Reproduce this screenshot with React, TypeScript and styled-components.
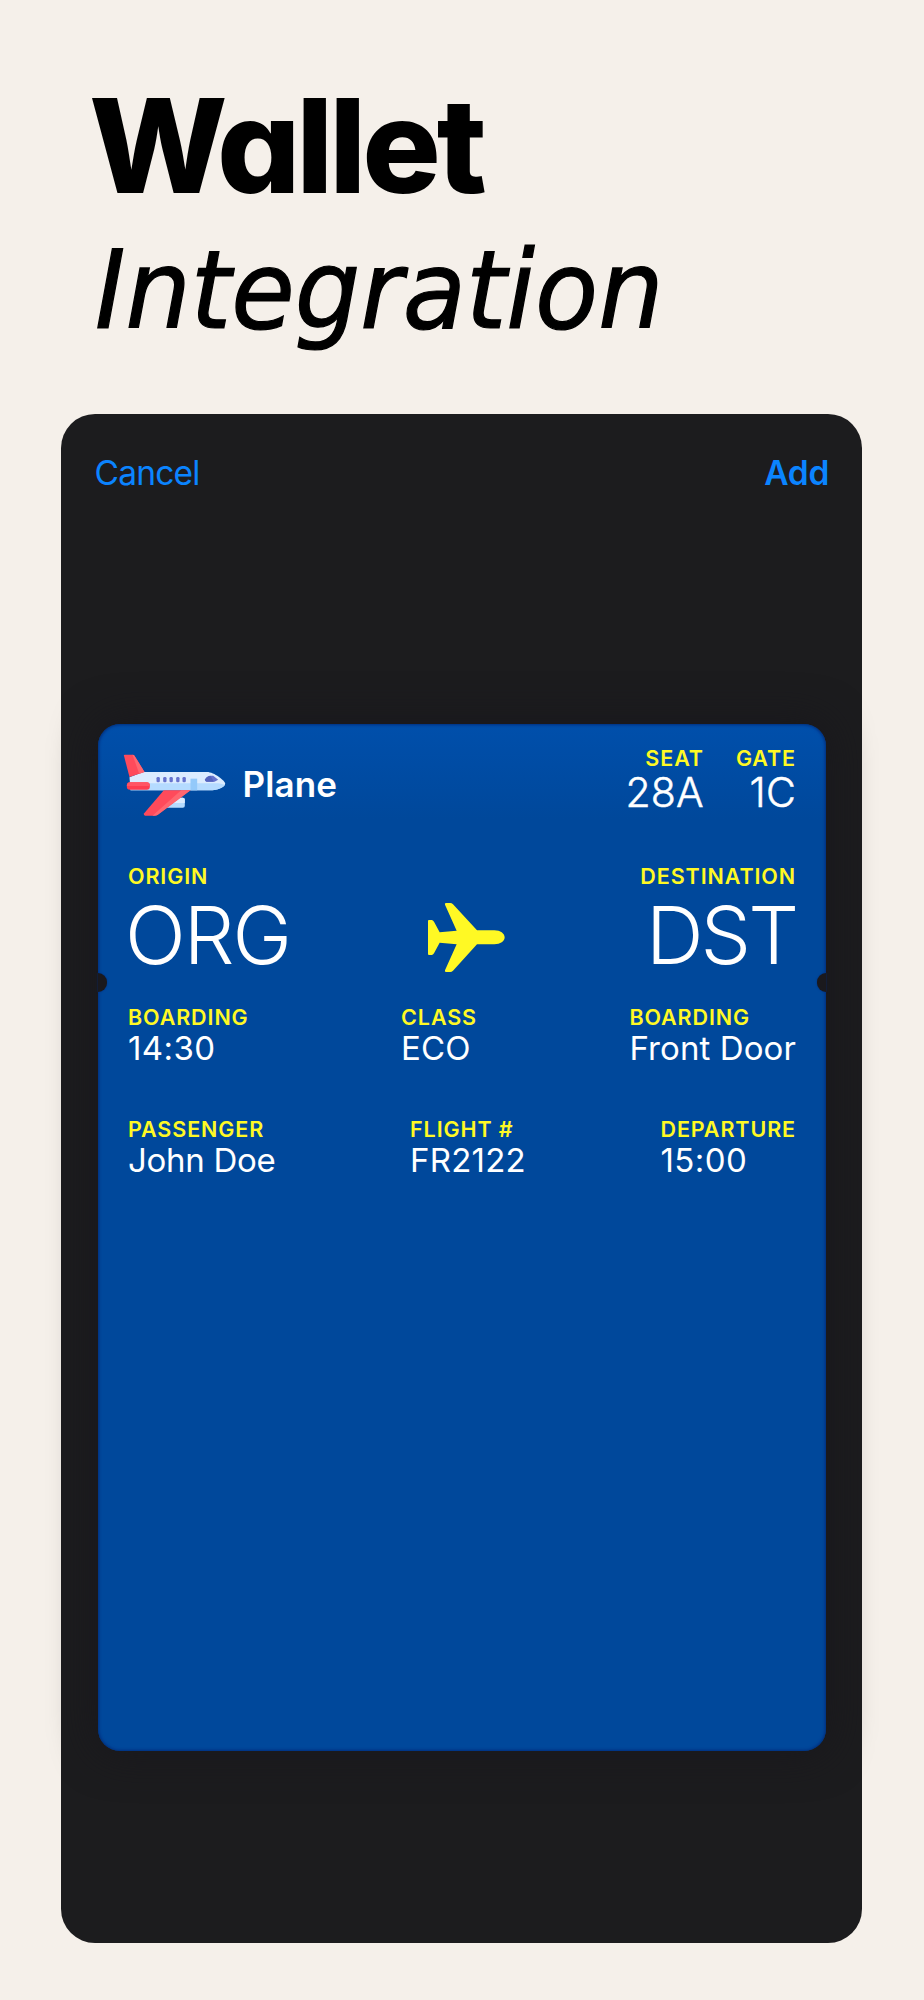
import React from "react";
import styled, { createGlobalStyle } from "styled-components";

interface PassField {
    label: string;
    value: string;
    tracking?: number;
}

const headerFields: PassField[] = [
    { label: "SEAT", value: "28A" },
    { label: "GATE", value: "1C" },
];

const originField: PassField = { label: "ORIGIN", value: "ORG", tracking: -2 };
const destinationField: PassField = { label: "DESTINATION", value: "DST", tracking: -3 };

const auxiliaryRows: PassField[][] = [
    [
        { label: "BOARDING", value: "14:30", tracking: 0.4 },
        { label: "CLASS", value: "ECO", tracking: 0.1 },
        { label: "BOARDING", value: "Front Door", tracking: 0.1 },
    ],
    [
        { label: "PASSENGER", value: "John Doe", tracking: -0.3 },
        { label: "FLIGHT #", value: "FR2122", tracking: 0.2 },
        { label: "DEPARTURE", value: "15:00", tracking: 0.4 },
    ],
];

const PlaneLogo: React.FC = () => (
    <Logo viewBox="40 58 308 186">
        <path d="M59 128 L100 112 H292 C312 112 346 138 346 147 C346 157 322 167 300 167 H62 Z" fill="#dcecff" />
        <path d="M60 146 H326 L345 150 C340 160 320 167 300 167 H62 Z" fill="#b5dbff" />
        <path d="M242 132 H262 V167 H242 Z" fill="#93c9fa" />
        <path d="M42 62 Q42 60 45 60 H69 Q72 60 74 63 L104 112 L59 127 Z" fill="#ff4a5b" />
        <path d="M68 60 Q72 60 74 63 L104 112 L88 117 Z" fill="#ff6670" />
        <rect x="51" y="143" width="69" height="22" rx="9" fill="#fd3e50" />
        <path d="M60 143 H111 Q120 143 120 154 H51 Q52 143 60 143 Z" fill="#ff5564" />
        <path d="M196 189 H219 Q225 189 225 195 V213 Q225 219 219 219 H170 Z" fill="#b5dbff" />
        <path d="M196 189 H219 Q225 189 225 195 V205 H184 Z" fill="#dcecff" />
        <path d="M162 167 H242 L143 241 Q139 243 134 243 H106 Q100 242 103 236 Z" fill="#ff4a5b" />
        <path d="M214 167 H242 L143 241 Q139 243 134 243 H128 Z" fill="#ff6670" />
        <path d="M286 134 Q292 123 304 123 H310 L325 135 L314 141 H290 Q284 140 286 134 Z" fill="#6673ce" />
        <path d="M286 134 Q292 123 302 123 L312 141 H290 Q284 140 286 134 Z" fill="#5564bd" />
        {[140, 160, 179, 199, 218].map((x) => (
            <rect key={x} x={x} y="127" width="10" height="16" rx="4" fill="#6673ce" />
        ))}
    </Logo>
);

const TransitIcon: React.FC = () => (
    <Transit viewBox="83 69 231 207">
        <path
            d="M83 122 Q83 120 86 120 H94 Q98 120 101 125 L118 157 L169 152 L134 74 Q132 69 137 69 H150 Q154 69 158 73 L230 151 H282 C300 151 313 161 313 172 C313 184 300 193 282 193 H230 L158 272 Q154 276 150 276 H137 Q132 276 134 271 L169 193 L118 188 L101 220 Q98 225 94 225 H86 Q83 225 83 222 Z"
            fill="#fff924"
        />
    </Transit>
);

interface FieldProps {
    field: PassField;
    size: FieldSize;
    alignEnd?: boolean;
}

const Field: React.FC<FieldProps> = ({ field, size, alignEnd }) => (
    <FieldColumn $alignEnd={alignEnd}>
        <FieldLabel>{field.label}</FieldLabel>
        <FieldValue $size={size} $tracking={field.tracking}>{field.value}</FieldValue>
    </FieldColumn>
);

const App: React.FC = () => (
    <Page>
        <GlobalStyle />
        <Heading>
            <Title>Wallet</Title>
            <Subtitle>Integration</Subtitle>
        </Heading>
        <Sheet>
            <Toolbar>
                <ToolbarButton>Cancel</ToolbarButton>
                <ToolbarButton $primary>Add</ToolbarButton>
            </Toolbar>
            <Pass>
                <PassHeader>
                    <Brand>
                        <PlaneLogo />
                        <BrandName>Plane</BrandName>
                    </Brand>
                    <HeaderFields>
                        {headerFields.map((field) => (
                            <Field key={field.label} field={field} size="header" alignEnd />
                        ))}
                    </HeaderFields>
                </PassHeader>
                <PrimaryRow>
                    <Field field={originField} size="primary" />
                    <TransitIcon />
                    <Field field={destinationField} size="primary" alignEnd />
                </PrimaryRow>
                <AuxiliaryRows>
                    {auxiliaryRows.map((row, index) => (
                        <AuxiliaryRow key={index}>
                            {row.map((field, i) => (
                                <Field key={i} field={field} size="auxiliary" />
                            ))}
                        </AuxiliaryRow>
                    ))}
                </AuxiliaryRows>
            </Pass>
        </Sheet>
    </Page>
);

const GlobalStyle = createGlobalStyle`
    * {
        box-sizing: border-box;
    }

    body {
        margin: 0;
        background-color: #f5f0ea;
    }
`;

const Page = styled.main`
    display: flex;
    flex-direction: column;
    width: 924px;
    height: 2000px;
    padding: 75.5px 62px 57px 61px;
    overflow: hidden;
    background-color: #f5f0ea;
    font-family: Inter, "Liberation Sans", sans-serif;
`;

const Heading = styled.div`
    display: flex;
    flex-direction: column;
    align-items: flex-start;
    height: 338.5px;
    padding-left: 28px;
    color: #000;
`;

const Title = styled.h1`
    margin: 0;
    font-size: 131px;
    font-weight: 800;
    line-height: 140px;
    letter-spacing: -4.2px;
    font-feature-settings: "cv11" 1;
`;

const Subtitle = styled.h2`
    margin: 5.5px 0 0 6px;
    font-family: "DejaVu Sans Condensed", "DejaVu Sans", sans-serif;
    font-size: 108px;
    font-style: italic;
    font-weight: 400;
    font-stretch: condensed;
    line-height: 140px;
    -webkit-text-stroke: 1.2px #000;
    transform: scaleX(1.062);
    transform-origin: left center;
`;

const Sheet = styled.section`
    flex-grow: 1;
    display: flex;
    flex-direction: column;
    padding: 39px 36px 0 36.5px;
    border-radius: 34px;
    background-color: #1c1c1e;
`;

const Toolbar = styled.header`
    display: flex;
    justify-content: space-between;
    height: 271px;
    margin: 0 -3px;
`;

const ToolbarButton = styled.button<{ $primary?: boolean }>`
    height: 40px;
    padding: 0;
    border: none;
    background: none;
    color: #0b84ff;
    font-family: inherit;
    font-size: 33.5px;
    font-weight: ${({ $primary }) => ($primary ? 600 : 400)};
    line-height: 40px;
    letter-spacing: ${({ $primary }) => ($primary ? -0.3 : -0.8)}px;
`;

const Pass = styled.article`
    position: relative;
    height: 1027px;
    padding: 21.5px 30px 0 30.5px;
    border-radius: 22px;
    background: linear-gradient(#004fab, #00489b 95px);
    box-shadow: 0 0 40px 4px #19181d, inset 0 0 3px 1px #002d7c;

    /* ticket notches on both edges */
    &::before,
    &::after {
        content: "";
        position: absolute;
        top: 249px;
        width: 9px;
        height: 19px;
        background-color: #1a191d;
        box-shadow: 0 0 2px #002d7c;
    }

    &::before {
        left: 0;
        border-radius: 0 10px 10px 0;
    }

    &::after {
        right: 0;
        border-radius: 10px 0 0 10px;
    }
`;

const PassHeader = styled.div`
    display: flex;
    justify-content: space-between;
    height: 118.5px;
`;

const Brand = styled.div`
    display: flex;
    align-items: center;
    height: 79px;
    margin-left: -5.5px;
`;

const Logo = styled.svg`
    width: 103px;
    height: 62px;
`;

const BrandName = styled.span`
    margin: 0 0 2px 17px;
    color: #fff;
    font-size: 35px;
    font-weight: 600;
    letter-spacing: 0.1px;
`;

const HeaderFields = styled.div`
    display: flex;
    gap: 32px;
`;

const PrimaryRow = styled.div`
    display: flex;
    justify-content: space-between;
    height: 140.5px;
`;

const Transit = styled.svg`
    width: 77px;
    height: 69px;
    margin: 39px 0 0 2px;
`;

const AuxiliaryRows = styled.div`
    display: flex;
    flex-direction: column;
    gap: 50px;
`;

const AuxiliaryRow = styled.div`
    display: flex;
    justify-content: space-between;
`;

const FieldColumn = styled.div<{ $alignEnd?: boolean }>`
    display: flex;
    flex-direction: column;
    align-items: ${({ $alignEnd }) => ($alignEnd ? "flex-end" : "flex-start")};
`;

const FieldLabel = styled.span`
    color: #fff924;
    font-size: 21.5px;
    font-weight: 560;
    line-height: 24px;
    letter-spacing: 0.9px;
`;

type FieldSize = "header" | "primary" | "auxiliary";

const valueStyles: Record<FieldSize, string> = {
    header: "font-size: 41px; line-height: 44px; font-weight: 300; letter-spacing: 0.2px; -webkit-text-stroke: 0.5px #fff;",
    primary: "margin-left: -3px; font-size: 80px; line-height: 94px; font-weight: 300;",
    auxiliary: "font-size: 33px; line-height: 38px; font-weight: 370;",
};

const FieldValue = styled.span<{ $size: FieldSize; $tracking?: number }>`
    color: #fff;
    white-space: nowrap;
    ${({ $size }) => valueStyles[$size]}
    ${({ $tracking }) => $tracking !== undefined && `letter-spacing: ${$tracking}px;`}
`;

export default App;
